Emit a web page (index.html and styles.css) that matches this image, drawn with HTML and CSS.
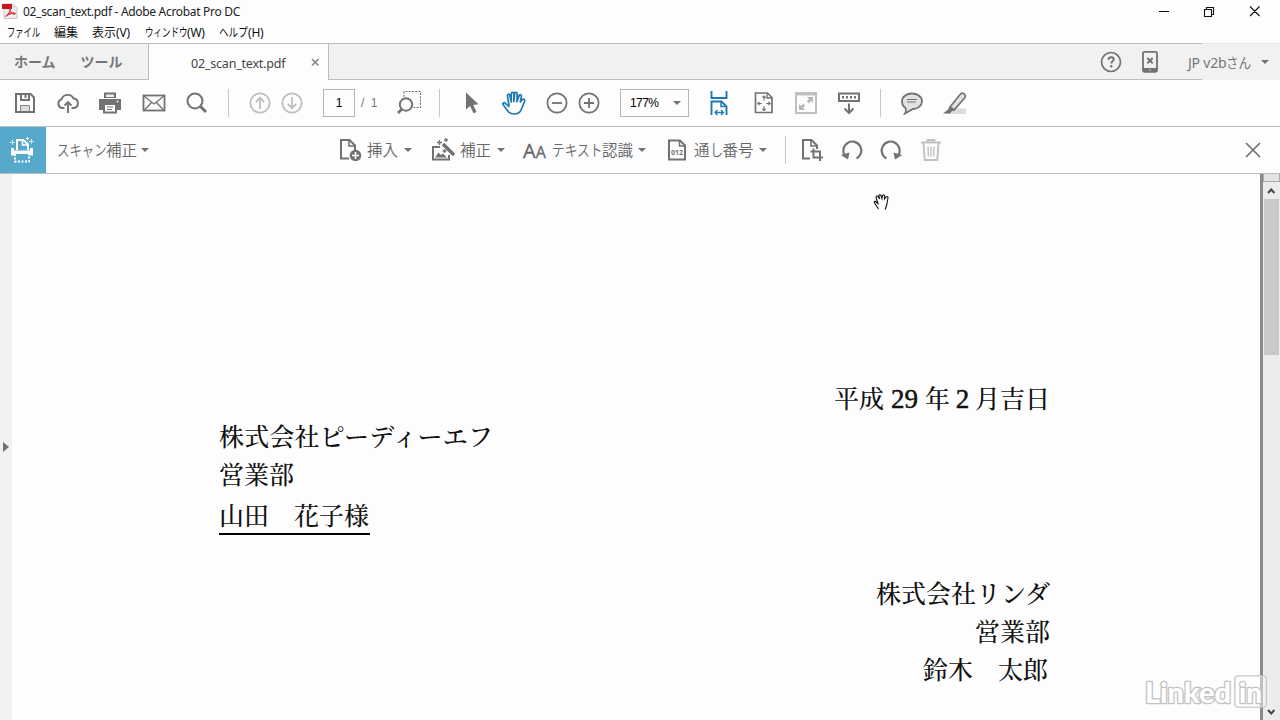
FILE: index.html
```html
<!DOCTYPE html>
<html lang="ja">
<head>
<meta charset="utf-8">
<title>02_scan_text.pdf - Adobe Acrobat Pro DC</title>
<link rel="stylesheet" href="styles.css">
</head>
<body>
<div class="window">
  <header class="titlebar">
    <svg class="app-icon" width="16" height="16" viewBox="0 0 16 16"><path d="M2 1h9l4 4v10.500H2z" fill="#f1eeee" stroke="#c9c4c4"/><path d="M0 1h10v5H0z" fill="#c4161c"/><path d="M10 1l4 4h-4z" fill="#ddd"/><path d="M3.500 13.500C6 12 9 7 8.500 5.500S7 7 9 9.500s5 1.500 4 .7-6 .3-9.500 3.300z" fill="none" stroke="#d2353a" stroke-width="1.200"/></svg>
    <span class="title">02_scan_text.pdf - Adobe Acrobat Pro DC</span>
    <svg class="win-controls" width="110" height="22" viewBox="0 0 110 22" fill="none" stroke="#111" stroke-width="1.100"><path d="M4 10.500h10M49.500 8.500h7v7h-7zM51.500 8V6.500h7v7H57M95 5.500l9.500 9.500M104.500 5.500L95 15"/></svg>
  </header>
  <nav class="menubar">
    <span class="menu m-file"><b class="squeeze">ファイル</b></span>
    <span class="menu m-edit">編集</span>
    <span class="menu m-view">表示<i>(V)</i></span>
    <span class="menu m-window"><b class="squeeze">ウィンドウ</b><i>(W)</i></span>
    <span class="menu m-help"><b class="squeeze">ヘルプ</b><i>(H)</i></span>
  </nav>
  <div class="tabs">
    <div class="home-tabs"><span>ホーム</span><span>ツール</span></div>
    <div class="doc-tab"><span class="doc-name">02_scan_text.pdf</span><svg width="9" height="9" viewBox="0 0 9 9"><path d="M1 1l6.500 6.500M7.500 1L1 7.500" stroke="#888" stroke-width="1.600"/></svg></div>
    <div class="tab-rest">
      <svg width="24" height="24" viewBox="0 0 24 24"><circle cx="12" cy="12" r="9.500" fill="none" stroke="#727272" stroke-width="1.700"/><path d="M9.500 9.800q0-2.500 2.600-2.500t2.600 2.300c0 1.800-2.400 1.700-2.400 4" fill="none" stroke="#727272" stroke-width="2"/><circle cx="12.200" cy="16.200" r="1.200" fill="#727272"/></svg>
      <svg class="device" width="24" height="24" viewBox="0 0 24 24"><rect x="5" y="1.800" width="14" height="20" rx="1.500" fill="none" stroke="#727272" stroke-width="1.800"/><path d="M5 18h14v4H5z" fill="#727272"/><path d="M9.300 8l5.400 5.400m0-5.400l-5.400 5.400" stroke="#727272" stroke-width="2"/><circle cx="12" cy="20" r=".8" fill="#ddd"/></svg>
    </div>
    <div class="account"><span class="account-name">JP v2b<b class="squeeze">さん</b></span><i class="caret"></i></div>
  </div>

  <div class="toolbar">
    <svg width="24" height="24" viewBox="0 0 24 24" fill="none" stroke="#727272" stroke-width="2"><path d="M3 3h14.500L21 6.500V21H3z"/><path d="M8 3v6h8V3"/><path d="M12.500 4v3" /><path d="M7.500 20v-5.500h9V20" fill="#ddd" stroke="#888" stroke-width="1"/></svg>
    <svg width="24" height="24" viewBox="0 0 24 24" fill="none" stroke="#727272" stroke-width="1.900"><path d="M8.500 17H6a4.500 4.500 0 0 1-.5-8.700A6.500 6.500 0 0 1 17.500 7.500a4.800 4.800 0 0 1 .5 9.500h-2.500"/><path d="M12 22V11M8.500 14.500L12 11l3.500 3.500"/></svg>
    <svg class="g18" width="24" height="24" viewBox="0 0 24 24"><path d="M6 1.500h12V7H6z" fill="#727272"/><path d="M8 3.500h8V6H8z" fill="#eee"/><path d="M1 8h22v11h-4v-4H5v4H1z" fill="#727272"/><path d="M6 14v7.500h12V14" fill="#fdfdfd" stroke="#727272" stroke-width="2"/><path d="M9 16h6M9 18.500h5" stroke="#727272"/><circle cx="19.500" cy="10.500" r="1" fill="#eee"/></svg>
    <svg class="g20" width="24" height="24" viewBox="0 0 24 24" fill="none" stroke="#727272"><rect x="1.500" y="4.500" width="21" height="15" stroke-width="1.800"/><path d="M2 5l10 8 10-8M2 19.500l7.500-8M22 19.500l-7.500-8" stroke-width="1.300"/></svg>
    <svg width="24" height="24" viewBox="0 0 24 24" fill="none" stroke="#727272"><circle cx="10" cy="10" r="7.500" stroke-width="2"/><path d="M15.500 15.500l5.500 5.500" stroke-width="3"/></svg>
    <i class="rule"></i>
    <svg width="24" height="24" viewBox="0 0 24 24" fill="none" stroke="#bfbfbf" stroke-width="1.800"><circle cx="12" cy="12" r="9.600"/><path d="M12 18V7M7.800 11L12 6.800l4.200 4.200"/></svg>
    <svg class="g8" width="24" height="24" viewBox="0 0 24 24" fill="none" stroke="#bfbfbf" stroke-width="1.800"><circle cx="12" cy="12" r="9.600"/><path d="M12 6v11M7.800 13l4.200 4.200 4.200-4.200"/></svg>
    <span class="page-box">1</span><span class="page-total">/ 1</span>
    <svg width="24" height="24" viewBox="0 0 24 24" fill="none" stroke="#727272"><path d="M7 9V.5h16.500v16H16" stroke-width="1.100" stroke-dasharray="2 1.300"/><circle cx="9" cy="13.500" r="6.200" stroke-width="2"/><path d="M5 18l-4 4" stroke-width="2.600"/></svg>
    <i class="rule g18"></i>
    <svg width="24" height="24" viewBox="0 0 24 24"><path d="M7 1.500v17l4-3.500 3.500 7.300 3-1.400-3.300-7 5.300-.7z" fill="#727272"/></svg>
    <svg width="24" height="24" viewBox="0 0 24 24" fill="none" stroke="#1f78b0" stroke-width="1.700" stroke-linejoin="round" stroke-linecap="round"><path d="M6.800 13L5.500 5c-.3-2 1.900-2.400 2.300-.7L9.300 11V2.800c0-2 2.500-2 2.600 0V10.500l.8-7.900c.2-1.900 2.600-1.700 2.500.2l-.3 8 2.200-6.200c.6-1.600 2.600-1 2.300.7L18.300 11c1-1.300 1.800-3 3-2.900 1.600.1 1.600 1.700 1.100 2.900L19.500 18c-1.300 3.500-4 5-7.500 5-3.400 0-5.200-1.400-7-4L1.200 13.800c-1-1.600.8-2.700 2-1.700L6.800 15.500z"/></svg>
    <svg width="24" height="24" viewBox="0 0 24 24" fill="none" stroke="#727272" stroke-width="1.800"><circle cx="12" cy="12" r="9.600"/><path d="M7 12h10"/></svg>
    <svg class="g8" width="24" height="24" viewBox="0 0 24 24" fill="none" stroke="#727272" stroke-width="1.800"><circle cx="12" cy="12" r="9.600"/><path d="M7 12h10M12 7v10"/></svg>
    <span class="zoom-box">177%<i class="caret"></i></span>
    <svg class="g18" width="24" height="26" viewBox="0 0 24 26" fill="none" stroke="#1f78b0" stroke-width="1.900"><path d="M4.500 1v7h15V1"/><path d="M4.500 25V11.500h10l5 5V25"/><path d="M14 11.500v5h5.500" stroke-width="1.500"/><path d="M8 22.500h8.500M10.500 20L8 22.500l2.500 2.500M14 20l2.500 2.500L14 25" stroke-width="1.300"/></svg>
    <svg class="g21" width="24" height="24" viewBox="0 0 24 24" fill="none" stroke="#727272" stroke-width="1.700"><path d="M3.500 2h12l4.500 4.500v15H3.500z"/><path d="M15 2.500v4.500h5" stroke-width="1.400"/><path d="M12 5v4.500M10.300 6.700L12 5l1.700 1.700M12 19.500V15M10.300 17.800L12 19.500l1.700-1.700M5.800 12.500h4M7.500 10.800l-1.700 1.700 1.700 1.700M18.200 12.500h-4M16.500 10.800l1.700 1.700-1.700 1.700" stroke-width="1.200"/></svg>
    <svg class="g18" width="24" height="24" viewBox="0 0 24 24"><path d="M2 2h20v20H2z" fill="none" stroke="#bfbfbf" stroke-width="2"/><path d="M1 1h22v3.500H1z" fill="#bfbfbf"/><path d="M19 6h-6l2 2-2.200 2.200 2 2L17 10l2 2zM5 19h6l-2-2 2.200-2.200-2-2L7 15l-2-2z" fill="#b5b5b5"/></svg>
    <svg width="24" height="24" viewBox="0 0 24 24" fill="none" stroke="#727272"><rect x="2" y="2.500" width="20" height="7.500" stroke-width="2"/><path d="M5 6.200h14" stroke-width="2.400" stroke-dasharray="2 2"/><path d="M12 12.500v9M7.500 17.500l4.500 4.500 4.500-4.500" stroke-width="2"/></svg>
    <i class="rule"></i>
    <svg width="24" height="24" viewBox="0 0 24 24"><path d="M12 2.500c5.500 0 10 3.300 10 7.800s-4.500 7.700-9 7.700L5 22.500q1.500-2.500.5-5.500C3 15.500 2 13 2 10.300c0-4.500 4.500-7.800 10-7.800z" fill="#e2e2e2" stroke="#727272" stroke-width="1.800"/><path d="M7 8.500h10M7 11h9" stroke="#727272" stroke-width="1"/></svg>
    <svg width="24" height="24" viewBox="0 0 24 24"><path d="M8 17.500h15V23H3z" fill="#dcdcdc"/><path d="M7 16L17.500 3q2-1.800 3.800 0 1.800 1.700.5 3.700L11 19z" fill="#e2e2e2" stroke="#727272" stroke-width="1.700"/><path d="M7 15l4.500 4-3 1.500-1.500 2H0l5-4z" fill="#727272"/></svg>
  </div>

  <div class="toolbar scanbar">
    <div class="scan-badge"><svg width="24" height="26" viewBox="0 0 24 26" fill="none" stroke="#fff" stroke-width="2"><path d="M7 13V3h6.500L18 7.500V13"/><path d="M12.500 3v5H18" stroke-width="1.500"/><path d="M1 18.500v-5h22v5z" fill="#fff" stroke="none"/><path d="M1 11h3v3H1zM20 11h3v3h-3z" fill="#fff" stroke="none"/><path d="M5 17v7.500h14V17" fill="#56a9cb" stroke-dasharray="2 1.500"/><path d="M2.500 3v5M0 5.500h5M21.500 2v5M19 4.500h5M17.500 0v3M16 1.500h3" stroke-width="1.200" stroke-dasharray="1.500 .7"/></svg></div>
    <span class="label l-scan"><b class="squeeze">スキャン</b>補正</span><i class="caret"></i>
    <svg class="insert" width="24" height="24" viewBox="0 0 24 24" fill="none" stroke="#727272" stroke-width="2"><path d="M11 20.500H3V2h8.500L17 7.500V12"/><path d="M11 2.500V8h6" stroke-width="1.600"/><circle cx="17.500" cy="17.500" r="5.800" fill="#727272" stroke="none"/><path d="M17.500 14v7M14 17.500h7" stroke="#fff" stroke-width="1.600"/></svg>
    <span class="label l-two">挿入</span><i class="caret"></i>
    <svg width="24" height="24" viewBox="0 0 24 24" fill="none" stroke="#727272" stroke-width="2"><path d="M9 9H2v12.500h16V17"/><path d="M4 19.500l3.500-5 2.500 2.500 2-1.500 4 4z" fill="#727272" stroke="none"/><path d="M12 6l11 11" stroke-width="3.500"/><path d="M8.500 2v5M6 4.500h5M15 0v4M13 2h4M13.500 11v4M11.500 13h4" stroke-width="1.300"/></svg>
    <span class="label l-two">補正</span><i class="caret"></i>
    <span class="letters"><b>A</b>A</span>
    <span class="label l-ocr"><b class="squeeze">テキスト</b>認識</span><i class="caret"></i>
    <span class="bates"><svg width="24" height="24" viewBox="0 0 24 24" fill="none" stroke="#727272" stroke-width="2"><path d="M4 2.500h11l5 5v14H4z"/><path d="M14.500 2.500V8H20" stroke-width="1.500"/><text x="6" y="17" font-family="Open Sans, sans-serif" font-weight="700" font-size="6.500" textLength="12" lengthAdjust="spacingAndGlyphs" fill="#727272" stroke="none">012</text></svg></span>
    <span class="label l-bates">通<b class="squeeze">し</b>番号</span><i class="caret"></i>
    <i class="rule"></i>
    <svg class="crop" width="24" height="24" viewBox="0 0 24 24" fill="none" stroke="#727272" stroke-width="2"><path d="M10 20.500H3V2h8.500L17 7.500V11"/><path d="M11 2.500V8h6" stroke-width="1.600"/><path d="M13.500 10.500v9H23M10.500 13.500h9.500V23"/></svg>
    <svg class="undo" width="24" height="24" viewBox="0 0 24 24"><path d="M16.500 20.500A9 9 0 1 0 4.500 17" fill="none" stroke="#727272" stroke-width="2.200"/><path d="M.8 17l8.700-2.500L8 21.500z" fill="#727272"/></svg>
    <svg class="redo" width="24" height="24" viewBox="0 0 24 24"><path d="M7.500 20.500A9 9 0 1 1 19.500 17" fill="none" stroke="#727272" stroke-width="2.200"/><path d="M23.200 17l-8.700-2.500L16 21.500z" fill="#727272"/></svg>
    <svg class="trash" width="24" height="24" viewBox="0 0 24 24" fill="none" stroke="#c0c0c0" stroke-width="1.900"><path d="M2 4.500h20M8.500 4V2h7v2M4.500 5l1.200 17h12.600l1.200-17"/><path d="M9 8.500l.4 10M12 8.500v10M15 8.500l-.4 10" stroke-width="1.400"/></svg>
    <svg class="close" width="18" height="18" viewBox="0 0 18 18"><path d="M2 2l14 14M16 2L2 16" stroke="#727272" stroke-width="1.700"/></svg>
  </div>

  <main class="viewer">
    <aside class="side-strip"><i class="expander"></i></aside>
    <article class="page">
      <p class="date">平成<b class="n29">29</b>年<b class="n2">2</b>月吉日</p>
      <p class="company">株式会社ピーディーエフ</p>
      <p class="dept">営業部</p>
      <p class="person"><span>山田　花子様</span></p>
      <p class="sender">株式会社リンダ</p>
      <p class="sender-dept">営業部</p>
      <p class="sender-name">鈴木　太郎</p>
    </article>
    <div class="scrollbar">
      <i class="splitter"></i>
      <svg class="up" width="16" height="16" viewBox="0 0 16 16"><path d="M5 10l3.200-3.500L11.400 10" fill="none" stroke="#444" stroke-width="2"/></svg>
      <i class="thumb"></i>
      <svg class="down" width="16" height="16" viewBox="0 0 16 16"><path d="M5 6l3.200 3.500L11.400 6" fill="none" stroke="#444" stroke-width="2"/></svg>
    </div>
  </main>
  <svg class="cursor" width="18" height="18" viewBox="0 0 18 18"><path d="M5.500 16L2 10.500Q.5 8.500 2 8.200l3 2.300L3 4.500q0-2 1.800-1.200L6.700 6 5.800 3q.5-2 2-.8L9 5.500 9.500 2.500q1-1.500 2 0V6l1.500-2q1.500-1.200 2 .5L13.700 12l-1.500 4.500" fill="#fff" stroke="#111" stroke-width="1.100"/></svg>
  <svg class="watermark" width="126" height="38" viewBox="0 0 126 38"><g font-family="Lato, sans-serif" font-weight="900" font-size="28" fill="#fff" stroke="#c2c2c2" stroke-width="2.600" paint-order="stroke" stroke-linejoin="round"><text x="4" y="30" textLength="86" lengthAdjust="spacingAndGlyphs">Linked</text><rect x="94" y="3" width="31" height="31" rx="3" fill="#fff" fill-opacity=".45" stroke-width="1.600"/><text x="98" y="30" textLength="23" lengthAdjust="spacingAndGlyphs">in</text></g></svg>
</div>
</body>
</html>
```
FILE: styles.css
```css
* { box-sizing: border-box; }
body { margin: 0; background: #fdfdfd; font-family: "Noto Sans", "Noto Sans CJK JP", sans-serif; color: #222; }
b, i { font-style: normal; font-weight: inherit; }
svg { flex: none; display: block; }
.window { position: relative; width: 1280px; height: 720px; overflow: hidden; display: flex; flex-direction: column; }
.squeeze { display: inline-block; transform-origin: 0 50%; white-space: nowrap; }

.titlebar { height: 23px; flex: none; display: flex; align-items: center; padding-left: 2px; }
.app-icon { margin: 0 5px 2px 0; }
.title { font-size: 12px; letter-spacing: -0.31px; white-space: nowrap; }
.win-controls { margin-left: auto; margin-right: 15px; }

.menubar { height: 20px; flex: none; display: flex; padding-left: 7px; font-size: 12px; line-height: 19px; color: #111; }
.menu { display: flex; white-space: nowrap; }
.menu i { letter-spacing: -0.2px; font-size: 12px; }
.m-file { width: 47px; }
.m-file .squeeze { transform: scaleX(.69); width: 33px; }
.m-edit { width: 38px; }
.m-view { width: 53px; }
.m-window { width: 74px; }
.m-window .squeeze { transform: scaleX(.71); width: 42px; }
.m-help .squeeze { transform: scaleX(.8); width: 29px; }

.tabs { height: 37px; flex: none; display: flex; background: #f1f1f1; }
.home-tabs { flex: none; width: 149px; display: flex; gap: 25px; padding-left: 14px; border: solid #bdbdbd; border-width: 1px 1px 1px 0; font-size: 14px; font-weight: 700; line-height: 36px; color: #777; }
.doc-tab { flex: none; width: 179px; background: #fdfdfd; border-top: 1px solid #bdbdbd; display: flex; align-items: center; padding-left: 42px; }
.doc-name { width: 120px; font-size: 12.5px; letter-spacing: -0.2px; color: #444; white-space: nowrap; padding-top: 2px; }
.tab-rest { flex: none; width: 874px; border: solid #bdbdbd; border-width: 1px 0 1px 1px; display: flex; align-items: center; padding-left: 770px; }
.device { margin-left: 15px; }
.account { flex: 1; display: flex; align-items: center; border-top: 1px solid #e4e4e4; font-size: 14px; color: #777; }
.account-name { width: 73px; margin-left: -14px; white-space: nowrap; letter-spacing: -0.2px; }
.account .squeeze { transform: scaleX(.9); width: 25px; }

.caret { flex: none; width: 0; height: 0; border: 4px solid transparent; border-top: 4.500px solid #727272; border-bottom: 0; }
.toolbar { height: 47px; flex: none; display: flex; align-items: center; gap: 19px; padding-left: 13px; border-bottom: 1px solid #bdbdbd; }
.rule { width: 1px; height: 28px; background: #c6c6c6; }
.g8 { margin-left: -11px; }
.g18 { margin-left: -1px; }
.g20 { margin-left: 1px; }
.g21 { margin-left: 2px; }
.page-box { width: 32px; height: 28px; border: 1px solid #b5b5b5; font: 12px/27px "Liberation Sans", sans-serif; text-align: center; color: #000; }
.page-total { width: 17px; margin-left: -13px; font: 12px "Liberation Sans", sans-serif; word-spacing: 3px; color: #777; white-space: nowrap; }
.zoom-box { width: 69px; height: 28px; border: 1px solid #b5b5b5; display: flex; align-items: center; justify-content: space-between; padding: 0 7px 0 9px; font: 12px "Liberation Sans", sans-serif; letter-spacing: -0.6px; color: #000; }

.scanbar { gap: 0; padding-left: 0; }
.scan-badge { width: 46px; height: 46px; background: #56a9cb; display: flex; align-items: center; justify-content: center; margin-right: 11px; padding-right: 2px; }
.label { flex: none; font-size: 15.500px; font-weight: 350; color: #666; white-space: nowrap; display: flex; margin-bottom: 2px; }
.l-scan { width: 84px; }
.l-scan .squeeze { transform: scaleX(.8); width: 49px; }
.l-two { width: 37px; }
.l-ocr { width: 86px; }
.l-ocr .squeeze { transform: scaleX(.82); width: 50px; }
.l-bates { width: 65px; }
.l-bates .squeeze { transform: scaleX(.85); width: 13px; }
.insert { margin-left: 189px; }
.insert + .label, .insert ~ svg + .l-two { margin-left: 5px; }
.l-two + .caret + svg { margin-left: 19px; }
.letters { width: 29px; margin-left: 18px; display: flex; align-items: baseline; font: 16px "Open Sans", sans-serif; color: #666; -webkit-text-stroke: .3px #666; }
.letters b { font-size: 20px; }
.bates { margin: 0 5px 0 19px; }
.scanbar .rule { margin-left: 18px; }
.crop { margin-left: 14px; }
.undo { margin-left: 16px; }
.redo { margin-left: 15px; }
.trash { margin-left: 16px; }
.close { margin-left: auto; margin-right: 18.500px; }

.viewer { flex: 1; min-height: 0; display: flex; }
.side-strip { width: 12px; background: #f1f1f1; padding: 268px 0 0 3px; }
.expander { display: block; border: 5px solid transparent; border-left: 6px solid #727272; border-right: 0; width: 0; }
.page { flex: 1; padding: 204px 210px 0 207px; border-right: 3px solid #8b8b8b; display: flex; flex-direction: column; font: 500 25px/38px "Noto Serif CJK JP", "Noto Sans CJK JP", serif; color: #111; }
.page p { margin: 0; height: 38px; white-space: nowrap; }
.date, .sender, .sender-dept, .sender-name { align-self: flex-end; }
.date b { display: inline-block; text-align: center; font-family: "Liberation Serif", serif; font-size: 27px; font-weight: 400; -webkit-text-stroke: .5px #111; }
.company { letter-spacing: .2px; }
.n29 { width: 41px; }
.n2 { width: 25px; }
.page .person { height: 81px; padding-top: 3px; }
.person span { display: inline-block; height: 40px; padding-right: 1px; border-bottom: 2px solid #000; }
.page .sender-name { margin-right: 2px; }
.scrollbar { width: 17px; background: #ececec; display: flex; flex-direction: column; }
.splitter { height: 8px; background: #e3e3e3; border: 1px solid #aaa; border-top: 0; }
.up { margin-top: 1px; }
.thumb { height: 156px; margin: 0 1px; background: #c9c9c9; }
.down { margin-top: auto; }
.cursor { position: absolute; left: 873px; top: 193px; }
.watermark { position: absolute; left: 1141px; top: 673px; }
```
